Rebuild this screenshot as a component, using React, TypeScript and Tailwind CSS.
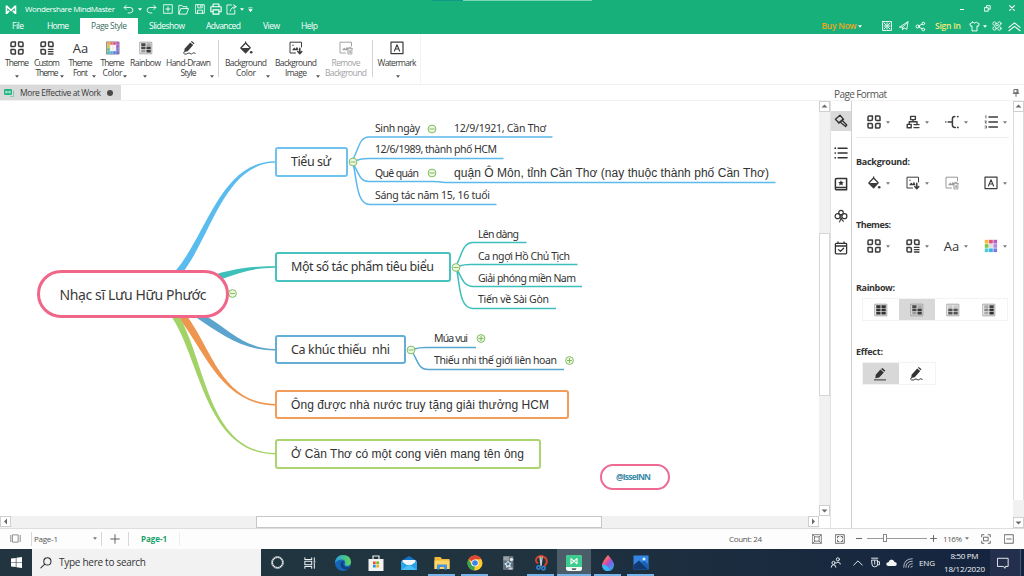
import React, { useLayoutEffect, useRef } from "react"

interface FitProps {
  w: number
  children: string
  className?: string
}

// Spreads a label over a given width by adjusting its letter spacing
const Fit: React.FC<FitProps> = ({ w, children, className = "" }) => {
  const ref = useRef<HTMLSpanElement>(null)

  useLayoutEffect(() => {
    const el = ref.current
    if (!el) return
    el.style.letterSpacing = "0px"
    const natural = el.getBoundingClientRect().width
    el.style.letterSpacing = `${(w - natural) / Math.max(1, children.length - 1)}px`
  }, [w, children])

  return (
    <span className={`block shrink-0 whitespace-pre ${className}`} style={{ width: w }}>
      <span ref={ref} className="inline-block">{children}</span>
    </span>
  )
}

interface IconProps {
  children: React.ReactNode
  className?: string
}

const Icon: React.FC<IconProps> = ({ children, className = "size-[14px]" }) => (
  <svg
    viewBox="0 0 14 14"
    className={`block shrink-0 ${className}`}
    fill="none"
    stroke="currentColor"
    strokeWidth="1.2"
    strokeLinecap="round"
    strokeLinejoin="round"
  >
    {children}
  </svg>
)

const Caret = ({ className = "text-[#777]" }: { className?: string }) => (
  <svg viewBox="0 0 4 3" className={`block w-[4px] h-[3px] shrink-0 ${className}`}>
    <path d="M0 .3h4L2 2.7z" fill="currentColor" />
  </svg>
)

const ThemeIcon = () => (
  <Icon>
    <path d="M1 2.2Q1 1 2.2 1H5.4V4.2Q5.4 5.4 4.2 5.4H1zM8.6 1h3.2Q13 1 13 2.2V5.4H9.8Q8.6 5.4 8.6 4.2zM1 8.6h3.2q1.2 0 1.2 1.2V13H2.2Q1 13 1 11.8zM9.8 8.6H13v3.2q0 1.2-1.2 1.2H8.6V9.8q0-1.2 1.2-1.2z" strokeWidth="1.5" />
  </Icon>
)

const CustomThemeIcon = () => (
  <Icon>
    <path d="M1 2.2Q1 1 2.2 1H5.4V4.2Q5.4 5.4 4.2 5.4H1zM8.6 1h3.2Q13 1 13 2.2V5.4H9.8Q8.6 5.4 8.6 4.2zM1 8.6h3.2q1.2 0 1.2 1.2V13H2.2Q1 13 1 11.8z" strokeWidth="1.5" />
    <path d="M8.4 8.4H13M8.4 10.7H13M8.4 13H13" strokeWidth="1.3" />
  </Icon>
)

const paletteColors = [
  "#f2a632", "#f0704c", "#e8407a", "#b04fc8",
  "#c8c83b", "#ffffff", "#ffffff", "#904ad0",
  "#52bd6a", "#ffffff", "#ffffff", "#6a6ae0",
  "#3ec0a8", "#3bb3ea", "#3a7be0", "#5a58dc"
]

const ColorIcon = () => (
  <Icon>
    <rect x=".9" y=".9" width="12.2" height="12.2" fill="#ddd6e2" stroke="#7d7488" strokeWidth=".8" />
    {paletteColors.map((c, i) => (
      <rect key={i} x={1.3 + (i % 4) * 3} y={1.3 + Math.floor(i / 4) * 3} width="2.4" height="2.4" fill={c} stroke="none" />
    ))}
  </Icon>
)

const PanelColorIcon = () => (
  <Icon>
    {["#f5b93a", "#e8507a", "#b85ac8", "#7cc94b", "#dedede", "#b48ae0", "#4ed0c8", "#3bb3ea", "#7a78e8"].map((c, i) => (
      <rect key={i} x={0.8 + (i % 3) * 4.3} y={0.8 + Math.floor(i / 3) * 4.3} width="3.7" height="3.7" fill={c} stroke="none" />
    ))}
  </Icon>
)

const RainbowIcon = ({ fills }: { fills: string[] }) => (
  <Icon>
    <rect x="1.2" y="1.2" width="11.6" height="11.6" fill="#fff" fillOpacity=".5" stroke="#909090" strokeWidth=".8" />
    {fills.map((c, i) => (
      <rect key={i} x={2.2 + (i % 2) * 5.2} y={2.2 + Math.floor(i / 2) * 3.3} width="4.4" height="2.8" fill={c} stroke="none" />
    ))}
  </Icon>
)

const mixed = ["#4a4a4a", "#a8a8a8", "#4a4a4a", "#3c3c3c", "#999", "#3c3c3c"]

const PenIcon = () => (
  <Icon>
    <path d="M2.6 7.8 8.2 1.4l3 2.5-5.5 6.3-3.5.9z" fill="currentColor" stroke="none" />
    <path d="M8.9.7 9.8 0l2.7 2.2-.8 1z" fill="currentColor" stroke="none" />
    <path d="M2.2 10.8Q.6 12.6 2.6 13t3.2-.6 2.4.1 2.2-.1 2.8-.2" strokeWidth="1" />
  </Icon>
)

const PenLineIcon = () => (
  <Icon>
    <path d="M2.8 7.8 7.4 2.6l3.4 2.9-4.6 5.100-3.900.7z" fill="currentColor" stroke="none" />
    <path d="M8.1 1.9 9.3.9l3 2.6-1 1.200z" fill="currentColor" stroke="none" />
    <path d="M1.4 12.9h11.2" strokeWidth="1" />
  </Icon>
)

const BucketIcon = () => (
  <Icon>
    <path d="M1.8 7 6.6 2 11.2 6.8 6.6 11.8z" strokeWidth="1.3" />
    <path d="M2.2 7H11L6.6 11.6z" fill="currentColor" stroke="none" />
    <path d="M6.6 2.2V.8" />
    <circle cx="12.2" cy="11.2" r="1.3" fill="currentColor" stroke="none" />
  </Icon>
)

const ImageIcon = () => (
  <Icon>
    <path d="M6.5 12H1V1.2h11.5V6" strokeWidth="1" />
    <path d="M3 9.2 5.2 6.4 6.6 8 8 5.8l1.6 3.4z" fill="currentColor" stroke="none" />
    <circle cx="4" cy="4.2" r=".7" fill="currentColor" stroke="none" />
    <path d="M10.8 7.2v5M8.800 10.6l2 2.2 2-2.2" strokeWidth="1.5" />
  </Icon>
)

const RemoveImageIcon = () => (
  <Icon>
    <path d="M6.5 12H1V1.2h11.5V5" strokeWidth="1" />
    <path d="M3 9.2 5.2 6.4 6.6 8 8 5.8l1 1.4v2z" fill="currentColor" stroke="none" />
    <path d="M8.2 7.7h5.4M9.8 7.4V6.4h2.200v1M8.900 8.4v4.6h4V8.4M10.2 9.6v2M11.6 9.6v2" strokeWidth=".9" />
  </Icon>
)

const WatermarkIcon = () => (
  <Icon>
    <rect x="1" y="1.2" width="12" height="11.4" strokeWidth="1.2" />
    <path d="M4.4 10 7 3.8 9.6 10M5.3 8h3.4" strokeWidth="1.1" />
  </Icon>
)

const FontIcon = () => (
  <Fit w={15.5} className="font-['Open_Sans',sans-serif] text-[13px] leading-[14px] font-medium text-[#333]">Aa</Fit>
)

const Slot: React.FC<{ className: string; children?: React.ReactNode }> = ({ className, children }) => (
  <div className={`flex h-full shrink-0 items-center justify-center ${className}`}>{children}</div>
)

const TitleBar = () => (
  <div className="flex h-[18px] text-white">
    <Slot className="w-[24px] justify-start pl-[5px]">
      <svg viewBox="0 0 12 10" className="h-[9px] w-[12px]" fill="none" stroke="currentColor" strokeWidth="1.8">
        <path d="M1 .5v9L4 6.6M11 .5v9L8 6.6M1 1l5 5 5-5" />
      </svg>
    </Slot>
    <Slot className="w-[96px] justify-start pl-[1px]"><Fit w={90} className="text-[8px]">Wondershare MindMaster</Fit></Slot>
    <Slot className="w-[17px]">
      <Icon className="size-[11px]"><path d="M4.2 1.5 1.4 4.4l2.8 2.8M1.8 4.4H9q3.6.2 3.6 3.4T9 11.4H6.6" strokeWidth="1.1" /></Icon>
    </Slot>
    <Slot className="w-[5px]"><Caret className="text-white" /></Slot>
    <Slot className="w-[18px]">
      <Icon className="size-[11px]"><path d="M9.8 1.5l2.8 2.9-2.8 2.8M12.2 4.4H5Q1.4 4.6 1.4 7.8T5 11.4h2.4" strokeWidth="1.1" /></Icon>
    </Slot>
    <Slot className="w-[15px]">
      <Icon className="size-[10px]"><path d="M1 1h12v12H1zM7 4v6M4 7h6" strokeWidth="1.2" /></Icon>
    </Slot>
    <Slot className="w-[17px]">
      <Icon className="size-[11px]"><path d="M1 12.4V1.8h4l1.3 1.6h5v2.4M1 12.4l2.6-6.6H13.4L11 12.4z" strokeWidth="1.1" /></Icon>
    </Slot>
    <Slot className="w-[15px]">
      <Icon className="size-[10px]"><path d="M1 1h12v12H1zM4 1v4.4h6V1M3.6 13V8.6h6.8V13M8 2.2v1.6" strokeWidth="1.2" /></Icon>
    </Slot>
    <Slot className="w-[17px]">
      <Icon className="size-[12px]"><path d="M3.6 4.4V1.2h6.8v3.2M3.2 10.2H1V4.4h12v5.8h-2.2M3.6 8h6.8v5H3.6z" strokeWidth="1.3" /></Icon>
    </Slot>
    <Slot className="w-[14px]">
      <Icon className="size-[11px]"><path d="M7 1.2H1.2v11.6h10V8M9.4 1l3.6 2.4-3.6 2.8M12.6 3.4Q6.4 3.4 5.4 9" strokeWidth="1.1" /></Icon>
    </Slot>
    <Slot className="w-[7px]"><Caret className="text-white" /></Slot>
    <Slot className="w-[10px]">
      <svg viewBox="0 0 6 6" className="size-[5px]"><path d="M.5 1h5M1 3h4L3 5.6z" fill="currentColor" stroke="currentColor" strokeWidth=".9" /></svg>
    </Slot>
    <Slot className="ml-auto w-[24px]"><div className="mt-[1px] h-px w-[4px] bg-white" /></Slot>
    <Slot className="w-[26px] pb-[2px]">
      <Icon className="size-[7px]"><path d="M1.4 5.4h7v7h-7zM5 5V1.4h7.4v7H9" strokeWidth="1.9" /></Icon>
    </Slot>
    <Slot className="w-[24px] pr-[1px] pb-[2px]">
      <Icon className="size-[6px]"><path d="M1.5 1.5l11 11M12.5 1.5l-11 11" strokeWidth="2.6" /></Icon>
    </Slot>
  </div>
)

const tabs = [
  { label: "File", w: 12, box: "w-[36px]" },
  { label: "Home", w: 22, box: "w-[44px]" },
  { label: "Page Style", w: 36, box: "w-[58px] bg-white text-[#3b6e5c]" },
  { label: "Slideshow", w: 36, box: "w-[58px]" },
  { label: "Advanced", w: 35, box: "w-[55px]" },
  { label: "View", w: 17, box: "w-[41px]" },
  { label: "Help", w: 17, box: "w-[35px]" }
]

const MenuBar = () => (
  <div className="flex h-[16px] text-[8.5px] text-white">
    {tabs.map((t) => (
      <Slot key={t.label} className={t.box}><Fit w={t.w}>{t.label}</Fit></Slot>
    ))}
    <Slot className="ml-auto w-[36px]"><Fit w={35} className="font-semibold text-[#f0a520]">Buy Now</Fit></Slot>
    <Slot className="w-[5px]"><Caret className="text-white" /></Slot>
    <Slot className="ml-[16px] w-[17px]">
      <Icon className="size-[10px]">
        <rect x=".8" y=".8" width="12.4" height="12.4" strokeWidth="1.4" strokeDasharray="4 1.5" />
        <path d="M7 3v8M3 7h8M3 3l2 2M11 3L9 5M3 11l2-2M11 11L9 9" strokeWidth="1.4" />
      </Icon>
    </Slot>
    <Slot className="w-[17px]">
      <Icon className="size-[10px]"><path d="M1 8.4 12.6 1 11 11.6 6.8 9.6 4.8 12.6V9zM12.6 1 4.8 9" /></Icon>
    </Slot>
    <Slot className="w-[16px]">
      <Icon className="size-[11px]">
        <circle cx="3.4" cy="7" r="2" /><circle cx="10.6" cy="3.2" r="1.7" /><circle cx="10.6" cy="10.8" r="1.7" />
        <path d="M5.2 6.1 9 4.1M5.2 7.9 9 9.9" />
      </Icon>
    </Slot>
    <Slot className="ml-[6px] w-[28px]"><Fit w={26} className="font-semibold text-[#f0ea7c]">Sign In</Fit></Slot>
    <Slot className="ml-[5px] w-[15px]">
      <Icon className="size-[11px]"><path d="M4.6 1.6 1 3.6 2.2 6.8 3.8 6.2V12.6h6.4V6.2l1.6.6L13 3.6 9.4 1.6Q7 3.8 4.6 1.6z" /></Icon>
    </Slot>
    <Slot className="w-[6px]"><Caret className="text-white" /></Slot>
    <Slot className="w-[18px]">
      <Icon className="size-[10px]">
        <circle cx="3.6" cy="3.6" r="2.4" /><circle cx="10.4" cy="3.6" r="2.4" />
        <circle cx="3.6" cy="10.4" r="2.4" /><circle cx="10.4" cy="10.4" r="2.4" /><path d="M6 6.5h2" />
      </Icon>
    </Slot>
    <Slot className="w-[18px] pr-[2px]">
      <Icon className="size-[13px]"><path d="M1 8l6-4.8L13 8M1 11.6l6-4.8 6 4.8" strokeWidth="1.1" /></Icon>
    </Slot>
  </div>
)

interface Tool {
  icon: React.ReactNode
  lines: [string, number][]
  box: string
  caret?: string
  muted?: boolean
}

const tools: Tool[] = [
  { icon: <ThemeIcon />, lines: [["Theme", 24]], box: "w-[30px] ml-[2px]", caret: "left-[13px]" },
  { icon: <CustomThemeIcon />, lines: [["Custom", 26], ["Theme", 23]], box: "w-[30px]", caret: "left-[28px]" },
  { icon: <FontIcon />, lines: [["Theme", 24], ["Font", 15]], box: "w-[37px]", caret: "left-[30px]" },
  { icon: <ColorIcon />, lines: [["Theme", 24], ["Color", 20]], box: "w-[27px]", caret: "left-[24px]" },
  { icon: <RainbowIcon fills={mixed} />, lines: [["Rainbow", 31]], box: "w-[39px]", caret: "left-[17px]" },
  { icon: <PenIcon />, lines: [["Hand-Drawn", 45], ["Style", 16]], box: "w-[47px]", caret: "left-[45px]" }
]

const backgroundTools: Tool[] = [
  { icon: <BucketIcon />, lines: [["Background", 42], ["Color", 20]], box: "w-[50px]", caret: "left-[45px]" },
  { icon: <ImageIcon />, lines: [["Background", 42], ["Image", 22]], box: "w-[50px]", caret: "left-[45px]" },
  { icon: <RemoveImageIcon />, lines: [["Remove", 29], ["Background", 42]], box: "w-[50px]", muted: true }
]

const ToolButton = ({ icon, lines, box, caret, muted }: Tool) => (
  <div className={`relative flex h-full shrink-0 flex-col items-center pt-[7px] ${box} ${muted ? "text-[#a3a3a3]" : "text-[#3c3c3c]"}`}>
    {icon}
    <div className="mt-[3px] flex flex-col items-center text-[8.5px] leading-[10px]">
      {lines.map(([text, w]) => <Fit key={text} w={w}>{text}</Fit>)}
    </div>
    {caret && <div className={`absolute top-[41px] ${caret}`}><Caret className="text-[#555]" /></div>}
  </div>
)

const Ribbon = () => (
  <div className="flex h-[51px] border-b border-[#f0f0f0] bg-white">
    {tools.map((t, i) => <ToolButton key={i} {...t} />)}
    <div className="mt-[6px] ml-[6px] h-[37px] w-px bg-[#d2d2d2]" />
    <div className="ml-[2px] flex">{backgroundTools.map((t, i) => <ToolButton key={i} {...t} />)}</div>
    <div className="mt-[6px] ml-[1px] h-[37px] w-px bg-[#d2d2d2]" />
    <ToolButton icon={<WatermarkIcon />} lines={[["Watermark", 39]]} box="w-[46px] ml-[1px]" caret="left-[22px]" />
    <div className="h-full w-px bg-[#f4f4f4]" />
  </div>
)

interface Topic {
  text: string
  x: number
  y: number
  w: number
  big?: boolean
  arial?: boolean
}

const topics: Topic[] = [
  { text: "Sinh ngày", x: 375, y: 128.5, w: 45 },
  { text: "12/9/1921, Cần Thơ", x: 454, y: 128.5, w: 92 },
  { text: "12/6/1989, thành phố HCM", x: 375, y: 149.5, w: 122 },
  { text: "Quê quán", x: 375, y: 173.5, w: 44 },
  { text: "quận Ô Môn, tỉnh Cần Thơ (nay thuộc thành phố Cần Thơ)", x: 454, y: 174, w: 315, big: true, arial: true },
  { text: "Sáng tác năm 15, 16 tuổi", x: 375, y: 195.5, w: 115 },
  { text: "Lên dàng", x: 478, y: 234.5, w: 41 },
  { text: "Ca ngợi Hồ Chủ Tịch", x: 478, y: 256.5, w: 92 },
  { text: "Giải phóng miền Nam", x: 478, y: 278.5, w: 98 },
  { text: "Tiến về Sài Gòn", x: 478, y: 300, w: 71 },
  { text: "Múa vui", x: 434, y: 338.5, w: 34 },
  { text: "Thiếu nhi thế giới liên hoan", x: 434, y: 360.5, w: 123 }
]

interface Branch extends Topic {
  bw: number
  bh: number
  border: string
}

const branches: Branch[] = [
  { text: "Tiểu sử", x: 275, y: 147, w: 40, bw: 73, bh: 30, border: "border-[#6fc1ee]" },
  { text: "Một số tác phẩm tiêu biểu", x: 275, y: 252, w: 143, bw: 176, bh: 30, border: "border-[#48c2be]" },
  { text: "Ca khúc thiếu  nhi", x: 275, y: 335, w: 99, bw: 131, bh: 29, border: "border-[#64aed5]" },
  { text: "Ông được nhà nước truy tặng giải thưởng HCM", x: 275, y: 390, w: 258, bw: 294, bh: 29, border: "border-[#f19d5c]", arial: true },
  { text: "Ở Cần Thơ có một cong viên mang tên ông", x: 275, y: 439, w: 233, bw: 266, bh: 30, border: "border-[#abd470]", arial: true }
]

const toggles = [
  { x: 232.5, y: 293.5 }, { x: 353, y: 162 }, { x: 432, y: 129 }, { x: 432, y: 173 },
  { x: 456, y: 267.5 }, { x: 411, y: 350 }, { x: 481, y: 338.5, plus: true }, { x: 569.5, y: 360.5, plus: true }
]

const CANVAS_TOP = 101

const MindMap = () => (
  <div className="relative min-w-0 flex-1 overflow-hidden bg-white">
    <svg viewBox="0 101 819 415" className="absolute top-0 left-0 h-[415px] w-[819px]" fill="none">
      <path fill="#5abcee" d="M174.5 272C207 235 220 162 275 161.2V162.8C225 163 210 238 183 272z" />
      <path fill="#3dc0bc" d="M218 273.5C236 269 250 266 275 266.2V267.7C254 267.8 240 272.5 222 279z" />
      <path fill="#5ba4cd" d="M206 316C228 329 244 348.5 275 349V350.5C242 350 222 335 194 316z" />
      <path fill="#ee9650" d="M187 316C212 350 222 403 275 404V405.5C220 405 203 346 177 316z" />
      <path fill="#a3d266" d="M179 316C206 362 208 452 275 453V454.5C205 453 201 360 171 316z" />
      <g stroke="#5cb9ec" strokeWidth="1.5">
        <path d="M353 159C359 149 359 137 369 137H552.5M356 160.5Q361 158.5 368 158.5H503.5M354 165C359 174 360 181.5 369 181.5H433Q438 181.5 445 182.5H775.5M353.5 165C357 182 357 204.5 370 204.5H496.5" />
      </g>
      <g stroke="#3dbfbb" strokeWidth="1.5">
        <path d="M457 264C462 254 463 242.5 473 242.5H526.5M459 266Q464 264.5 470 264.5H577.5M457 270C462 277 463 286.5 473 286.5H582M457 271C460 288 460 308.5 473 308.5H556" />
      </g>
      <path stroke="#58a7d0" strokeWidth="1.5" d="M414 349Q419 347.5 426 347.5H476M413 353C418 362 419 369.5 428 369.5H564" />
      {toggles.map((t, i) => (
        <g key={i} stroke="#74b556" strokeWidth=".9">
          <circle cx={t.x} cy={t.y} r="3.9" fill="#eef8e0" />
          <path d={`M${t.x - 2.5} ${t.y}h5${t.plus ? `M${t.x} ${t.y - 2.5}v5` : ""}`} />
        </g>
      ))}
    </svg>

    <div className="absolute top-[169px] left-[37px] flex h-[48px] w-[192px] items-center justify-center rounded-full border-[3px] border-[#ef6688] bg-white">
      <Fit w={147} className="pt-px font-['Noto_Sans',sans-serif] text-[14px] text-[#3a3a3a]">Nhạc sĩ Lưu Hữu Phước</Fit>
    </div>

    {branches.map((b) => (
      <div
        key={b.text}
        className={`absolute flex items-center rounded-[3px] border-2 bg-white pl-[14px] text-[#333] ${b.border} ${b.arial ? "font-['Liberation_Sans',sans-serif] text-[12px]" : "pt-px font-['Noto_Sans',sans-serif] text-[12.5px]"}`}
        style={{ left: b.x, top: b.y - CANVAS_TOP, width: b.bw, height: b.bh }}
      >
        <Fit w={b.w}>{b.text}</Fit>
      </div>
    ))}

    {topics.map((t) => (
      <div
        key={t.text}
        className={`absolute leading-4 text-[#333] ${t.arial ? "font-['Liberation_Sans',sans-serif]" : "font-['Noto_Sans',sans-serif]"} ${t.big ? "text-[12px]" : "text-[10.5px]"}`}
        style={{ left: t.x, top: Math.floor(t.y - CANVAS_TOP - 8.5) }}
      >
        <Fit w={t.w}>{t.text}</Fit>
      </div>
    ))}

    <div className="absolute top-[363px] left-[600px] flex h-[26px] w-[70px] items-center justify-center rounded-full border-2 border-[#ee6a93] bg-white pr-[3px]">
      <Fit w={35} className="font-['Open_Sans',sans-serif] text-[8.5px] font-bold text-[#3d8ba8]">@IsseINN</Fit>
    </div>
  </div>
)

const ScrollButton = ({ dir }: { dir: "up" | "down" | "left" | "right" }) => {
  const paths = {
    up: "M2.5 6.5 5.5 3.5 8.5 6.5z",
    down: "M2.5 4.5 5.5 7.5 8.5 4.5z",
    left: "M7 2.5 4 5.5 7 8.5z",
    right: "M4 2.5 7 5.5 4 8.5z"
  }
  return (
    <div className="size-[11px] shrink-0 border border-[#cfcfcf] bg-white">
      <svg viewBox="1 1 9 9" className="block size-[9px]"><path d={paths[dir]} fill="#6a6a6a" /></svg>
    </div>
  )
}

const Editor = () => (
  <div className="flex w-[831px] shrink-0 flex-col">
    <div className="flex h-[16px] border-b border-[#f2f2f2]">
      <div className="flex w-[121px] items-center bg-[#dadada] pl-[4px] text-[8.5px] text-[#3a3a3a]">
        <svg viewBox="0 0 10 9" className="h-[9px] w-[10px]">
          <rect x="0" y="1" width="8" height="6" rx="1" fill="#21b582" />
          <path d="M2 5.5V3l2 1.6L6 3v2.5" fill="none" stroke="#fff" strokeWidth=".8" />
          <path d="M6 8.5h3.5V2.5" fill="none" stroke="#7acfb0" />
        </svg>
        <Fit w={81} className="ml-[6px] pt-px">More Effective at Work</Fit>
        <div className="ml-[6px] size-[6px] rounded-full bg-[#4a4a4a]" />
      </div>
    </div>
    <div className="flex h-[415px]">
      <MindMap />
      <div className="flex w-[12px] flex-col items-center border-r border-[#e2e2e2] bg-[#f1f1f1]">
        <ScrollButton dir="up" />
        <div className="mt-[121px] h-[163px] w-[11px] border border-[#d6d6d6] bg-white" />
        <div className="mt-auto"><ScrollButton dir="down" /></div>
      </div>
    </div>
    <div className="flex h-[12px] border-r border-[#e2e2e2] pr-[11px]">
      <div className="flex min-w-0 flex-1 bg-[#f1f1f1]">
        <ScrollButton dir="left" />
        <div className="ml-[245px] h-[12px] w-[346px] border border-[#c6c6c6] bg-white" />
        <div className="ml-auto"><ScrollButton dir="right" /></div>
      </div>
    </div>
  </div>
)

const PanelCell = ({ icon, caret = true, muted }: { icon: React.ReactNode; caret?: boolean; muted?: boolean }) => (
  <div className={`flex w-[39px] shrink-0 items-center ${muted ? "text-[#999]" : "text-[#3c3c3c]"}`}>
    <div className="flex w-[15px] justify-center">{icon}</div>
    {caret && <div className="ml-[5px]"><Caret /></div>}
  </div>
)

const PanelTitle = ({ w, children, className }: { w: number; children: string; className: string }) => (
  <div className={`pl-[4px] text-[9px] leading-[12px] font-bold text-[#333] ${className}`}><Fit w={w}>{children}</Fit></div>
)

const rainbowOptions = [
  ["#333", "#333", "#333", "#333", "#333", "#333"],
  mixed,
  ["#c8c8c8", "#c8c8c8", "#555", "#555", "#555", "#555"],
  ["#aaa", "#444", "#888", "#333", "#aaa", "#333"]
]

const PageFormat = () => (
  <div className="flex min-w-0 flex-1 flex-col">
    <div className="flex h-[16px] items-center justify-between border-b border-[#f2f2f2] pr-[4px] pl-[3px] text-[#555]">
      <Fit w={53} className="pt-[3px] text-[10px]">Page Format</Fit>
      <Icon className="mt-[1px] size-[8px]"><path d="M4 1h6.5v6H4zM2 7.5h10M7 7.5V13M8.8 1v6" strokeWidth="1.5" /></Icon>
    </div>
    <div className="flex h-[427px]">
      <div className="flex w-[21px] flex-col border-r border-[#cfcfcf] pt-[10px] text-[#333]">
        <div className="flex h-[20px] items-center justify-center bg-[#d9d9d9]">
          <Icon>
            <path d="M1.4 5.2 6 1.2 9.2 5 4.8 8.8zM3.2 7l1.6 2.2 4.8-4M8 6.2 12.8 11l-1.2 1.6L6.4 8.2" strokeWidth="1.3" />
          </Icon>
        </div>
        <div className="mt-[15px] flex h-[13px] justify-center">
          <Icon><path d="M4.2 2.2H13M4.2 7H13M4.2 11.8H13" strokeWidth="1.6" /><path d="M1.2 2.2h.1M1.2 7h.1M1.2 11.8h.1" strokeWidth="1.7" /></Icon>
        </div>
        <div className="mt-[18px] flex h-[14px] justify-center">
          <Icon>
            <path d="M2.8 1.4h9.8v11.4H2.8Q1.4 12.8 1.4 11.4V2.8Q1.4 1.4 2.8 1.4zM1.6 10.6h11" strokeWidth="1.5" />
            <path d="M7 3.2l.9 1.7 1.9.3-1.4 1.3.4 1.900L7 7.5l-1.8.9.4-1.900-1.400-1.300 1.900-.3z" fill="currentColor" stroke="none" />
          </Icon>
        </div>
        <div className="mt-[18px] flex h-[14px] justify-center">
          <Icon>
            <circle cx="7" cy="3.600" r="2.300" />
            <circle cx="3.600" cy="7.200" r="2.500" />
            <circle cx="10.400" cy="7.200" r="2.500" />
            <path d="M7 5.900Q7.200 10.200 5.600 13M7.200 8.800q.6 2.400 2.200 3.400" strokeWidth="1.100" />
          </Icon>
        </div>
        <div className="mt-[18px] flex h-[14px] justify-center">
          <Icon><path d="M2.2 2.4h9.6q.8 0 .8.8v8.800q0 .8-.8.8H2.200q-.8 0-.8-.8V3.2q0-.8.8-.8zM1.4 5h11.2M4 1v1.4M10 1v1.4M4.6 8.6l1.800 1.800 3.200-3.200" strokeWidth="1.3" /></Icon>
        </div>
      </div>

      <div className="w-[161px] shrink-0">
        <div className="mx-[4px] flex h-[37px] items-center border-b border-[#ececec] pt-[6px] pl-[10px]">
          <PanelCell icon={<ThemeIcon />} />
          <PanelCell icon={<Icon><path d="M4.6 1.4h4.8v3.2H4.6zM7 4.6v2M3.2 9V6.8h7.8V9M1.2 9.4h4v3.4h-4z" strokeWidth="1.4" /><path d="M8 9.6h5M8 12.6h5" strokeWidth="1.4" /></Icon>} />
          <PanelCell icon={<Icon><path d="M.8 7h.1M3.2 7H7.4M9.8 1.6q-2.4 0-2.4 2.4v6q0 2.400 2.400 2.400h.6" strokeWidth="1.5" /><path d="M12.8 1.6h.1M12.8 12.4h.1" strokeWidth="1.7" /></Icon>} />
          <PanelCell icon={<Icon><path d="M5 2h8.400M5 7h8.400M5 12h8.400" strokeWidth="1.5" /><path d="M1.4 1 2 .7v2.4M1 6h1.500L1 8h1.500M1 11h1.500v2H1" strokeWidth=".7" /></Icon>} />
        </div>
        <PanelTitle w={54} className="mt-[18px]">Background:</PanelTitle>
        <div className="mt-[8px] flex h-[14px] items-center pl-[14px]">
          <PanelCell icon={<BucketIcon />} />
          <PanelCell icon={<ImageIcon />} />
          <PanelCell icon={<RemoveImageIcon />} caret={false} muted />
          <PanelCell icon={<WatermarkIcon />} />
        </div>
        <PanelTitle w={35} className="mt-[29px]">Themes:</PanelTitle>
        <div className="mt-[8px] flex h-[14px] items-center pl-[14px]">
          <PanelCell icon={<ThemeIcon />} />
          <PanelCell icon={<CustomThemeIcon />} />
          <PanelCell icon={<FontIcon />} />
          <PanelCell icon={<PanelColorIcon />} />
        </div>
        <PanelTitle w={39} className="mt-[29px]">Rainbow:</PanelTitle>
        <div className="mt-[4px] ml-[10px] flex h-[23px] w-[146px] border border-[#f3f3f3] text-[#333]">
          {rainbowOptions.map((fills, i) => (
            <div key={i} className={`flex flex-1 items-center justify-center pr-px ${i === 1 ? "bg-[#d8d8d8]" : ""}`}>
              <RainbowIcon fills={fills} />
            </div>
          ))}
        </div>
        <PanelTitle w={27} className="mt-[25px]">Effect:</PanelTitle>
        <div className="mt-[4px] ml-[10px] flex h-[23px] w-[74px] border border-[#f3f3f3] text-[#333]">
          <div className="flex flex-1 items-center justify-center bg-[#d8d8d8] pr-[3px]"><PenLineIcon /></div>
          <div className="flex flex-1 items-center justify-center pr-[3px]"><PenIcon /></div>
        </div>
      </div>

      <div className="flex w-[11px] flex-col bg-[#f1f1f1]">
        <ScrollButton dir="up" />
        <div className="h-[388px] w-[11px] border-x border-[#dcdcdc] bg-white" />
        <div className="mt-auto"><ScrollButton dir="down" /></div>
      </div>
    </div>
  </div>
)

const StatusBar = () => (
  <div className="flex h-[21px] items-center border-t border-[#dedede] bg-[#fdfdfd] pb-px text-[8px] text-[#555]">
    <Slot className="w-[31px]">
      <Icon className="size-[11px] text-[#888]"><path d="M3.6 2.4h6.8v9.2H3.6zM1 3v8M13 3v8" strokeWidth="1.2" /></Icon>
    </Slot>
    <div className="h-[14px] w-px bg-[#d8d8d8]" />
    <Fit w={24} className="ml-[2px]">Page-1</Fit>
    <div className="ml-[35px]"><Caret /></div>
    <div className="ml-[4px] h-[14px] w-px bg-[#d8d8d8]" />
    <Slot className="w-[26px]"><Icon className="size-[10px]"><path d="M7 1v12M1 7h12" strokeWidth="1.3" /></Icon></Slot>
    <div className="h-[14px] w-px bg-[#d8d8d8]" />
    <Fit w={26} className="ml-[12px] font-bold text-[#1a9f6a]">Page-1</Fit>
    <div className="ml-[12px] h-[14px] w-px bg-[#eee]" />
    <Fit w={33} className="ml-auto">Count: 24</Fit>
    <Slot className="ml-[43px] w-[23px]"><Icon className="size-[10px]"><path d="M1 1h12v12H1zM4 4h6v6H4zM1 1l3 3M13 1l-3 3M1 13l3-3M13 13l-3-3" strokeWidth="1" /></Icon></Slot>
    <Slot className="w-[23px]"><Icon className="size-[10px]"><path d="M1 1h12v12H1zM3.5 5.5V3.5H5.5M8.5 3.5h2V5.5M10.5 8.5v2H8.5M5.5 10.5H3.5V8.5" strokeWidth="1.2" /></Icon></Slot>
    <Slot className="ml-[4px] w-[8px]"><div className="h-px w-[6px] bg-[#666]" /></Slot>
    <div className="relative ml-[4px] h-px w-[60px] bg-[#999]">
      <div className="absolute -top-[4px] left-[16px] h-[8px] w-[4px] border border-[#888] bg-white" />
    </div>
    <Slot className="ml-[2px] w-[8px]"><Icon className="size-[7px]"><path d="M7 1v12M1 7h12" strokeWidth="1.7" /></Icon></Slot>
    <Fit w={19} className="ml-[6px]">116%</Fit>
    <div className="ml-[3px]"><Caret /></div>
    <Slot className="ml-[6px] w-[22px]"><Icon className="size-[10px]"><path d="M4 1H1v3M10 1h3v3M1 10v3h3M13 10v3h-3M4 4.5h6v5H4z" /></Icon></Slot>
    <Slot className="mr-[4px] w-[23px]"><Icon className="size-[10px]"><path d="M1 1h12v12H1zM4 7h6" /></Icon></Slot>
  </div>
)

const apps: { icon: React.ReactNode; box: string; running?: boolean; active?: boolean }[] = [
  {
    box: "w-[33px]",
    icon: <svg viewBox="0 0 16 16" className="size-[16px]">
      <defs><linearGradient id="edge" x1="0" y1="0" x2="1" y2="0"><stop offset="0" stopColor="#2a9fe0" /><stop offset="1" stopColor="#5fd65a" /></linearGradient></defs>
      <circle cx="8" cy="8" r="8" fill="#1565b8" />
      <path d="M0 8.5Q.5 0 8 0t8 7q0 3.5-3.6 3.7-3 0-2.4-1.5Q11 5 7 4.6 2 4.6 0 8.5z" fill="url(#edge)" />
      <path d="M5.5 8Q5 14 11.5 14.5 14 14 15 11.8 9.5 13.5 8.2 9q0-1.5 1-2.5Q6.5 5.8 5.5 8z" fill="#123f84" />
    </svg>
  },
  {
    box: "w-[33px]",
    icon: <svg viewBox="0 0 16 16" className="size-[16px]">
      <path d="M5 4V1h6v3" fill="none" stroke="#eee" strokeWidth="1.2" /><path d="M.5 4h15v12H.5z" fill="#f3f3f3" />
      <path d="M5 6.5h2.7v2.7H5z" fill="#e8532a" /><path d="M8.3 6.5H11v2.7H8.3z" fill="#79b51c" />
      <path d="M5 9.8h2.7v2.7H5z" fill="#1c9ae0" /><path d="M8.3 9.8H11v2.7H8.3z" fill="#f5b31c" />
    </svg>
  },
  {
    box: "w-[33px]",
    icon: <svg viewBox="0 0 16 16" className="size-[16px]">
      <path d="M0 6 8 1l8 5v9H0z" fill="#1373c8" /><path d="M1.5 5h13v5h-13z" fill="#f4f8fc" />
      <path d="M0 6l8 5.5L16 6v9H0z" fill="#2aa3ea" /><path d="M0 15l8-5.5L16 15z" fill="#4cc0f5" />
    </svg>
  },
  {
    box: "w-[33px]", running: true,
    icon: <svg viewBox="0 0 16 16" className="size-[16px]">
      <path d="M.5 2h6l1.5 2h7.5v10H.5z" fill="#f0b93a" /><path d="M.5 5.5h15V14H.5z" fill="#fcd768" />
      <path d="M3 14.5V9.5h10v5h-3v-2.5H6v2.5z" fill="#4a94dc" />
    </svg>
  },
  {
    box: "w-[33px]", running: true,
    icon: <svg viewBox="0 0 16 16" className="size-[16px]">
      <circle cx="8" cy="8" r="7.5" fill="#fccb2c" /><path d="M8 8 1.5 4.2A7.5 7.5 0 0 1 14.5 4.3H8z" fill="#e14435" />
      <path d="M1.5 4.2 5 10.2 8 11.5 7 15.4A7.5 7.5 0 0 1 1.5 4.2z" fill="#38a352" />
      <circle cx="8" cy="8" r="3.6" fill="#fff" /><circle cx="8" cy="8" r="2.8" fill="#3f7fe8" />
    </svg>
  },
  {
    box: "w-[33px]",
    icon: <svg viewBox="0 0 16 16" className="size-[16px]">
      <rect x="3" y="1" width="10.5" height="14" rx="1" fill="#64717c" /><path d="M3.5 1.5h5.5v4H3.5z" fill="#9aa2a8" />
      <circle cx="11.5" cy="4.5" r="1.7" fill="#e6e6e6" />
      <path d="M8 5.5l1.2 2 2.3.3-1.2 2 .5 2.4-2.5-.5-2 1.2-.3-2.4L4 8.8l2.3-1z" fill="#dfe8ef" /><circle cx="8" cy="9" r="1.5" fill="#3f7fae" />
      <path d="M8.5 12.5h4v2h-4z" fill="#c9d0d5" />
    </svg>
  },
  {
    box: "w-[33px]", running: true,
    icon: <svg viewBox="0 0 16 16" className="size-[16px]">
      <path d="M3.5 3Q8-.8 12.5 3q3 4-1 8" fill="none" stroke="#cf4327" strokeWidth="2.2" />
      <path d="M4 3q-2.6 2.5 1 5.5" fill="none" stroke="#cf4327" strokeWidth="2" />
      <path d="M7 1.5l1 9.5M9.2 1.5 8 11" stroke="#c9ced4" strokeWidth="1.3" />
      <circle cx="5.5" cy="12.5" r="1.7" fill="none" stroke="#3586d8" strokeWidth="1.5" /><circle cx="10.5" cy="13.2" r="1.7" fill="none" stroke="#3586d8" strokeWidth="1.5" />
    </svg>
  },
  {
    box: "w-[34px]", active: true, running: true,
    icon: <svg viewBox="0 0 16 16" className="size-[16px]">
      <rect x="0" y="0" width="16" height="16" rx="2.5" fill="#f2fbf7" /><path d="M0 12V2.5Q0 0 2.5 0h11Q16 0 16 2.5V12z" fill="#3ecb8e" />
      <path d="M5 8.800V3.600l3 2.600 3-2.600v5.200L8 6.200z" fill="none" stroke="#fff" strokeWidth="1.1" strokeLinejoin="round" /><path d="M5.5 13.5h5l-1 1.3h-3z" fill="#222" />
    </svg>
  },
  {
    box: "w-[33px]", running: true,
    icon: <svg viewBox="0 0 16 16" className="size-[16px]">
      <defs><linearGradient id="drop" x1="0" y1="0" x2=".8" y2="1"><stop offset=".1" stopColor="#ffb52e" /><stop offset=".42" stopColor="#ef4f8b" /><stop offset=".6" stopColor="#8e5be0" /><stop offset="1" stopColor="#28a8ea" /></linearGradient></defs>
      <path d="M8 0q6.5 7 6 10.5Q13 16 8 16T2 10.5Q2 7 8 0z" fill="url(#drop)" /><path d="M2 9.5q6 0 8 6Q2.5 17.5 2 9.5z" fill="#35b8f0" />
    </svg>
  },
  {
    box: "w-[33px]", running: true,
    icon: <svg viewBox="0 0 16 16" className="size-[16px]">
      <path d="M.5.5h15v14H.5z" fill="#3387e0" /><path d="M.5 14.5V10L6 5.5l9.5 9z" fill="#123a72" /><path d="M8 8l3-2.5 4.5 4v5z" fill="#1b62b4" />
      <circle cx="11" cy="4" r="1.5" fill="#dff0ff" />
    </svg>
  }
]

const Taskbar = () => (
  <div className="flex h-[27px] bg-linear-to-r from-[#20383f] via-[#20333f] to-[#14233f] text-[#eef2f5]">
    <Slot className="w-[32px] bg-[#21343f]">
      <svg viewBox="0 0 11 11" className="size-[11px]" fill="#fff">
        <path d="M0 1.6 4.8.9v4.3H0zM5.4.8 11 0v5.2H5.4zM0 5.8h4.8v4.3L0 9.4zM5.4 5.8H11V11l-5.6-.8z" />
      </svg>
    </Slot>
    <div className="flex w-[229px] items-center bg-[#f2f2f2] pl-[8px] text-[#333]">
      <Icon className="size-[12px]"><circle cx="8.6" cy="5.2" r="4.2" /><path d="M5.6 8.2 1 12.8" /></Icon>
      <Fit w={87} className="ml-[7px] text-[10px]">Type here to search</Fit>
    </div>
    <Slot className="w-[33px]"><div className="size-[11px] rounded-full border-[1.5px] border-white outline-[.5px] outline-white/60" /></Slot>
    <Slot className="w-[32px]">
      <Icon className="size-[12px]"><path d="M1 1v2h8V1M1 13v-2h8v2M1 5h8v4H1zM12 1v3M12 7v6M11.5 5.5h1.5" strokeWidth="1.2" /></Icon>
    </Slot>
    {apps.map((a, i) => (
      <div key={i} className={`relative flex h-full shrink-0 items-center justify-center pt-px ${a.box} ${a.active ? "bg-[#4a5d68]" : ""}`}>
        {a.icon}
        {a.running && <div className={`absolute bottom-0 h-[2px] bg-[#76b5ea] ${a.active ? "inset-x-0" : "inset-x-[3px]"}`} />}
      </div>
    ))}
    <Slot className="ml-auto w-[24px]">
      <Icon className="size-[11px]"><circle cx="4.5" cy="7.5" r="2" /><path d="M1.5 13q0-3 3-3t3 3" /><circle cx="10" cy="3" r="2" /><path d="M8 7.5q2-2.5 5 .5v1" /></Icon>
    </Slot>
    <Slot className="w-[22px]"><Icon className="size-[10px]"><path d="M1 10l6-6 6 6" strokeWidth="1.3" /></Icon></Slot>
    <Slot className="w-[12px]"><Icon className="size-[11px]"><path d="M2.5 4h7v5.5q0 3-3.5 3t-3.5-3zM9.5 6H12v4H9.5M2 1.5h8M6 5v4" /></Icon></Slot>
    <Slot className="w-[20px]">
      <svg viewBox="0 0 12 8" className="h-[7px] w-[11px]"><path d="M2.5 8Q0 8 0 5.8t2.5-2.2Q3.5.5 6 .5T9.5 3.5Q12 3.5 12 5.8T9.5 8z" fill="#f4f6f8" /></svg>
    </Slot>
    <Slot className="w-[13px]">
      <Icon className="size-[10px]"><path d="M1 13Q1 1 13 1M4 13Q4 4.5 13 4.5M7.5 13Q7.5 8 13 8M11 13q0-1.5 2-1.5" strokeWidth="1" /></Icon>
    </Slot>
    <Slot className="w-[26px]"><Fit w={16} className="text-[8px]">ENG</Fit></Slot>
    <div className="flex w-[50px] flex-col items-center justify-center pr-[1px] text-[8px] leading-[12.5px]">
      <Fit w={28}>8:50 PM</Fit>
      <Fit w={41}>18/12/2020</Fit>
    </div>
    <Slot className="w-[30px] bg-[#232f4c] pr-[5px]">
      <Icon className="size-[12px]"><path d="M1 1.5h12v9.5H9.5V13.2L7.2 11H1z" strokeWidth="1.1" /></Icon>
    </Slot>
    <div className="w-[4px] border-l border-[#4a566e]" />
  </div>
)

export default function App() {
  return (
    <div className="flex h-[576px] w-[1024px] flex-col overflow-hidden bg-white font-['Open_Sans','Noto_Sans',sans-serif]">
      <div className="relative bg-[#17b07b]">
        <div className="absolute top-0 left-[432px] flex h-px">
          <div className="w-[31px] bg-[#0f9a8c]" />
          <div className="w-[129px] bg-[#7ad6b3]" />
        </div>
        <TitleBar />
        <MenuBar />
      </div>
      <Ribbon />
      <div className="flex h-[443px]">
        <Editor />
        <PageFormat />
      </div>
      <StatusBar />
      <Taskbar />
    </div>
  )
}
